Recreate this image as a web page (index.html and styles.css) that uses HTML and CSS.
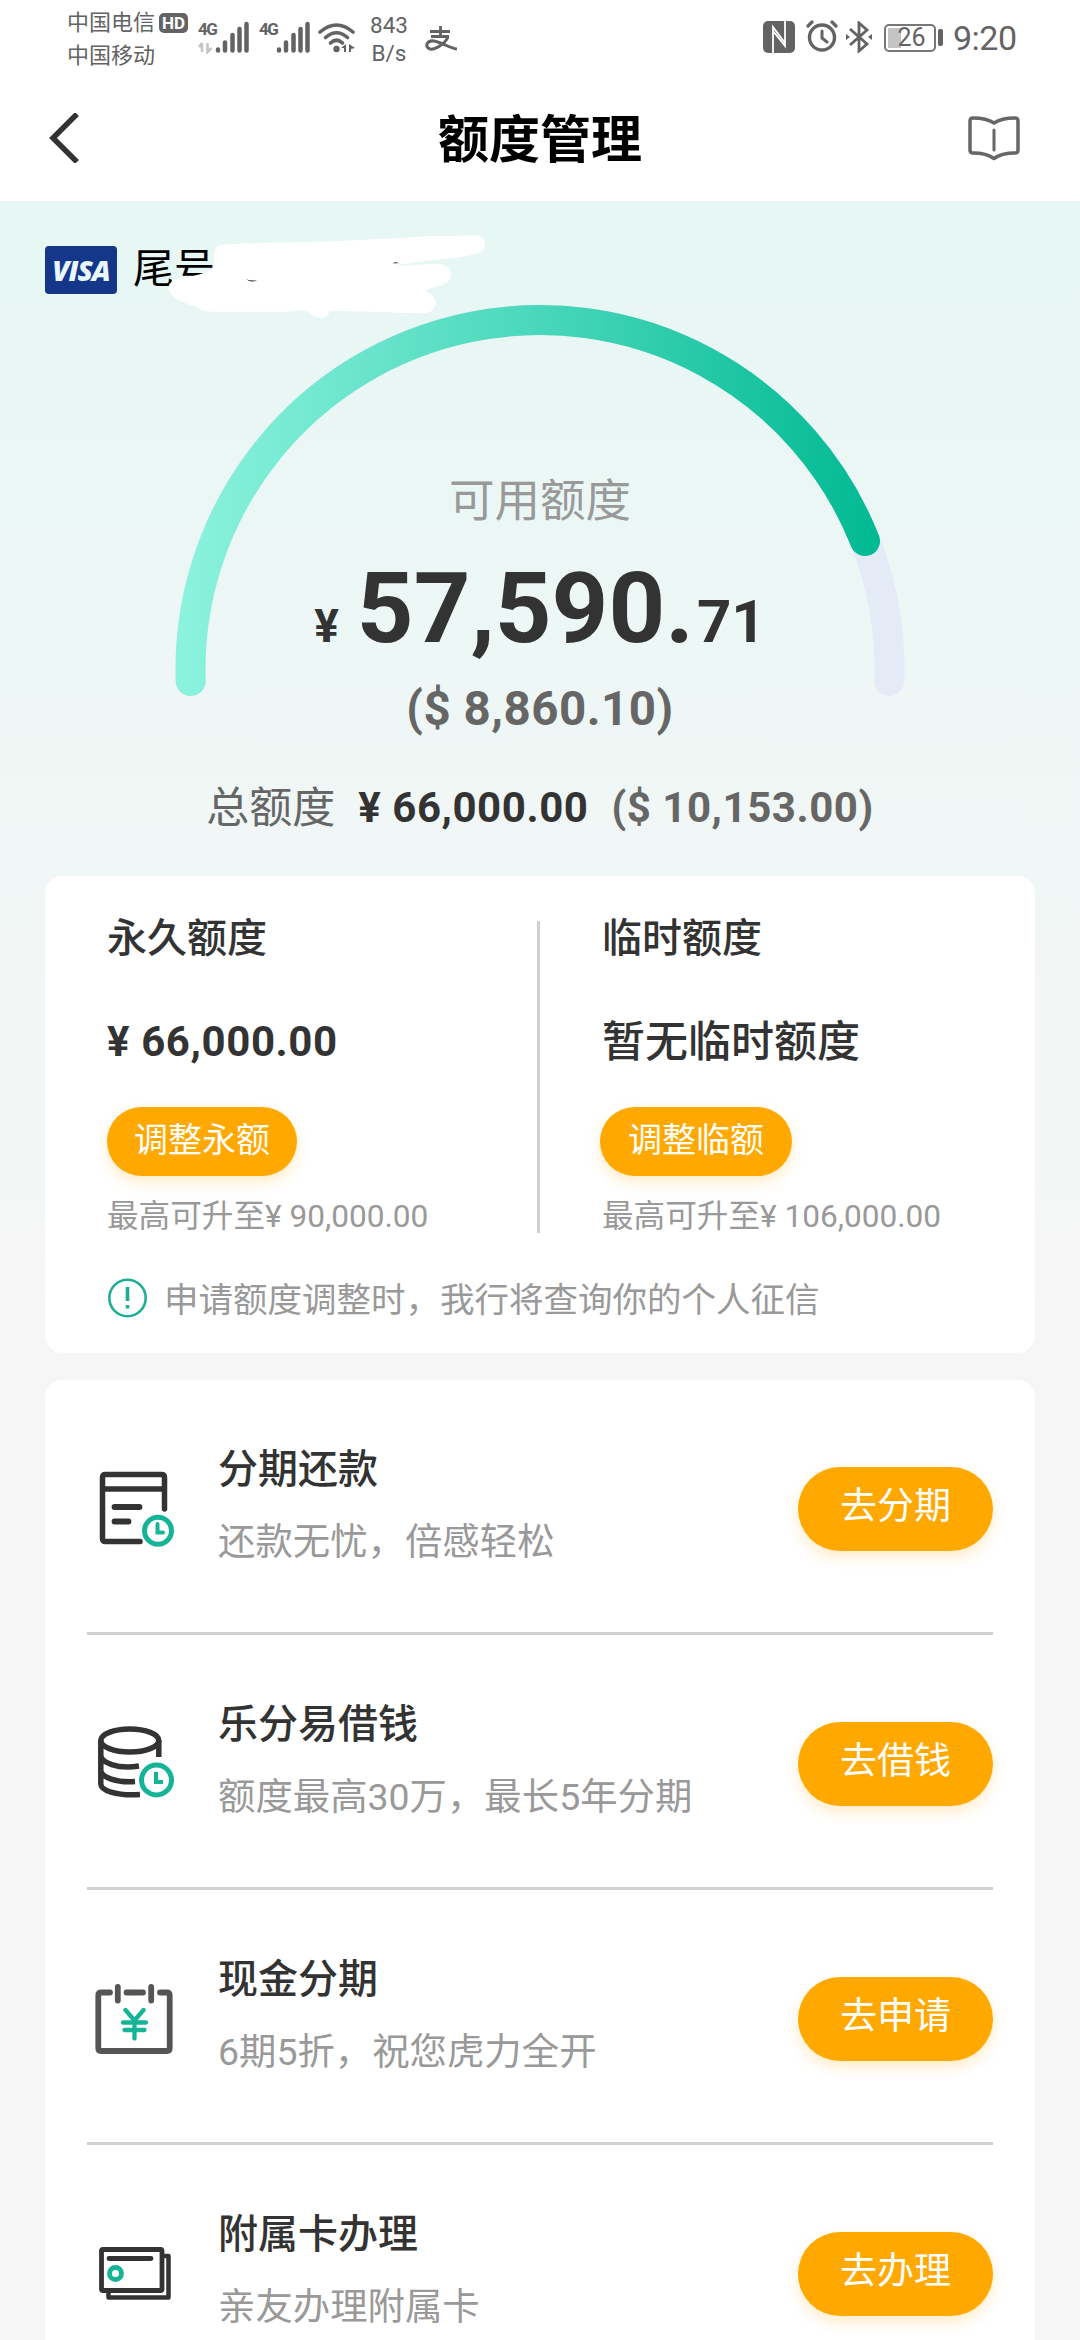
FILE: index.html
```html
<!DOCTYPE html>
<html lang="zh-CN">
<head>
<meta charset="utf-8">
<title>额度管理</title>
<link rel="stylesheet" href="styles.css">
</head>
<body>
<div class="status">
  <div class="carriers"><div>中国电信</div><div>中国移动</div></div>
  <span class="hd">HD</span>
  <div class="signal">
    <span class="net">4G</span>
    <svg width="52" height="34" viewBox="0 0 52 34">
      <path d="M4 23v9M4 23l-3 4M9.500 23v9l4-4" stroke="#c4c4c4" stroke-width="2.500" fill="none"/>
      <path d="M20 30.500v-1M27 30.500v-8M34.500 30.500V15M41.500 30.500V9M48.500 30.500V4" stroke="#636363" stroke-width="4.500" stroke-linecap="round"/>
    </svg>
  </div>
  <div class="signal second">
    <span class="net">4G</span>
    <svg width="52" height="34" viewBox="0 0 52 34">
      <path d="M20 30.500v-1M27 30.500v-8M34.500 30.500V15M41.500 30.500V9M48.500 30.500V4" stroke="#636363" stroke-width="4.500" stroke-linecap="round"/>
    </svg>
  </div>
  <svg class="wifi" width="38" height="32" viewBox="0 0 38 32">
    <g fill="none" stroke="#636363" stroke-width="3.600" stroke-linecap="round"><path d="M2 10Q18.500-4 35 10"/><path d="M7.500 15.500Q18.500 6 29.500 15.500"/><path d="M12.500 21Q18.500 15.500 24.500 21"/></g>
    <circle cx="18.500" cy="27" r="3.200" fill="#636363"/>
    <path d="M28 22v8h-2v-4h-3zM31 22l6 4-4 1v3h-2z" fill="#636363"/>
  </svg>
  <div class="speed"><div>843</div><div>B/s</div></div>
  <svg class="pay" width="32" height="26" viewBox="0 0 32 26" fill="none" stroke="#636363">
    <path d="M5 5.500h20M15.500 0v10M6 10.500h18" stroke-width="2.800"/>
    <path d="M23 11C20 18 10 24 5 23C-1 21 2 14 9 15C16 16 24 22 32 23" stroke-width="3"/>
  </svg>
  <svg class="nfc" width="32" height="32" viewBox="0 0 32 32">
    <rect width="32" height="32" rx="5" fill="#636363"/>
    <path d="M10 32V6L22 22M22 0v25L10 10" fill="none" stroke="#fff" stroke-width="1.800"/>
  </svg>
  <svg class="alarm" width="32" height="32" viewBox="0 0 32 32" fill="none" stroke="#636363" stroke-linecap="round">
    <circle cx="16" cy="17.500" r="12.500" stroke-width="3.400"/>
    <path d="M16 11v7l5 4" stroke-width="3"/><path d="M2 6l4-4M30 6l-4-4" stroke-width="3.200"/>
  </svg>
  <svg class="bt" width="26" height="32" viewBox="0 0 26 32">
    <path d="M4 8l17 15-8 7V2l8 7L4 24" fill="none" stroke="#636363" stroke-width="2.800"/>
    <path d="M0 13l4 3-4 3zM26 13l-4 3 4 3z" fill="#636363"/>
  </svg>
  <div class="battery"><span>26</span></div>
  <i class="battery-cap"></i>
  <div class="clock">9:20</div>
</div>

<header class="nav">
  <svg width="34" height="50" viewBox="0 0 34 50"><path d="M31 1L7 25l24 24" fill="none" stroke="#333" stroke-width="5.500"/></svg>
  <h1>额度管理</h1>
  <svg width="52" height="46" viewBox="0 0 52 46" fill="none" stroke="#666" stroke-width="3.500" stroke-linecap="round" stroke-linejoin="round">
    <path d="M26 8C20 4 12 3 5 3Q2 3 2 6V35Q2 38 5 38C14 38 20 39 26 43.500C32 39 38 38 47 38Q50 38 50 35V6Q50 3 47 3C40 3 32 4 26 8Z"/><path d="M26 15v20" stroke-width="3"/>
  </svg>
</header>

<main>
  <section class="hero">
    <svg class="gauge" width="740" height="410" viewBox="170 296 740 410" fill="none" stroke-width="30" stroke-linecap="round">
      <defs><linearGradient id="arc" gradientUnits="userSpaceOnUse" x1="175" y1="0" x2="880" y2="0"><stop offset="0" stop-color="#8df3de"/><stop offset=".5" stop-color="#4bd8bc"/><stop offset="1" stop-color="#00b992"/></linearGradient></defs>
      <path d="M190.700 681A349.500 349.500 0 1 1 889.300 681" stroke="#e5eaf7"/>
      <path d="M190.700 681A349.500 349.500 0 0 1 865 541" stroke="url(#arc)"/>
    </svg>
    <div class="card-no">
      <span class="visa">VISA</span><span class="tail">尾号</span>
      <svg class="mask" width="330" height="92" viewBox="435 95 990 276">
        <path d="M580 205C584 190 582 178 583 155Q588 134 606 133C730 124 860 128 950 122C1080 116 1200 110 1225 107Q1310 108 1370 104Q1396 110 1396 132Q1395 151 1375 159C1310 175 1210 180 1125 195C1180 200 1220 188 1260 191Q1294 197 1293 225Q1289 249 1260 256Q1230 262 1215 273Q1249 286 1247 311Q1241 340 1205 339C1120 336 1020 333 930 331Q920 355 903 354C890 352 870 342 860 332C840 326 820 334 800 334H570Q540 334 530 320C490 307 446 292 445 261Q450 235 490 232C520 228 555 218 580 205Z" fill="#fff"/>
        <path d="M678 237q15 5 33 3q-15 9-33-3M1118 189q8-6 18 0z" fill="#222"/>
      </svg>
    </div>
    <div class="avail-label">可用额度</div>
    <div class="avail"><span class="yen">¥</span><span class="big">57,590.</span><span class="cents">71</span></div>
    <div class="avail-usd">($ 8,860.10)</div>
    <div class="total"><span class="total-label">总额度</span><b>¥ 66,000.00</b><b class="usd">($ 10,153.00)</b></div>
  </section>

  <section class="card limits">
    <div class="cols">
      <div class="col">
        <h2>永久额度</h2>
        <div class="amount">¥ 66,000.00</div>
        <button class="pill">调整永额</button>
        <p>最高可升至¥ 90,000.00</p>
      </div>
      <i class="rule"></i>
      <div class="col temp">
        <h2>临时额度</h2>
        <div class="amount none">暂无临时额度</div>
        <button class="pill">调整临额</button>
        <p>最高可升至¥ 106,000.00</p>
      </div>
    </div>
    <div class="notice">
      <svg width="40" height="40" viewBox="0 0 40 40" fill="none" stroke="#1fae94"><circle cx="20.500" cy="20" r="18.200" stroke-width="2.600"/><path d="M20.500 9v14M20.500 27v3.600" stroke-width="3.600"/></svg>
      <span>申请额度调整时，我行将查询你的个人征信</span>
    </div>
  </section>

  <section class="card services">
    <div class="row">
      <svg width="90" height="90" viewBox="0 0 90 90" fill="none" stroke="#333" stroke-width="5.500" stroke-linecap="round">
        <path d="M50 77.500H15.500Q12.500 77.500 12.500 74.500V13.500Q12.500 10.500 15.500 10.500H71.500Q74.500 10.500 74.500 13.500V45M12.500 25h62"/><path d="M24.500 43h25M24.500 57.500h14" stroke-width="5.800"/>
        <g stroke="#16b497" stroke-width="5"><circle cx="68" cy="66.700" r="13.500"/><path d="M67.500 60v8.500H73" stroke-width="4"/></g>
      </svg>
      <div class="info"><h3>分期还款</h3><p>还款无忧，倍感轻松</p></div>
      <button class="go">去分期</button>
    </div>
    <div class="row">
      <svg width="90" height="90" viewBox="0 0 90 90" fill="none" stroke="#333" stroke-width="5.500">
        <ellipse cx="39.800" cy="21.500" rx="29" ry="11.500"/><path d="M10.800 21.500V65C10.800 71 25 77 50 75.500M68.800 21.500V38M10.800 37C12 43 26 50.500 49 47M10.800 52C12 58 26 64 45 62.500"/>
        <g stroke="#16b497" stroke-width="5"><circle cx="66.500" cy="61" r="15"/><path d="M66 53v10H73" stroke-width="4"/></g>
      </svg>
      <div class="info"><h3>乐分易借钱</h3><p>额度最高30万，最长5年分期</p></div>
      <button class="go">去借钱</button>
    </div>
    <div class="row">
      <svg width="90" height="90" viewBox="0 0 90 90" fill="none" stroke="#555" stroke-width="5.800" stroke-linecap="round">
        <path d="M20 18.500H11.300Q8.300 18.500 8.300 21.500V74Q8.300 77 11.300 77H76.700Q79.700 77 79.700 74V21.500Q79.700 18.500 76.700 18.500H70M36.500 18.500H53M27.800 13V26.500M61.200 13V26.500"/>
        <path d="M35.500 36L44.500 46.500L53.500 36M44.500 46.500V64.500M33 48.500H56M34.500 56H54.500" stroke="#16b497" stroke-width="4.300"/>
      </svg>
      <div class="info"><h3>现金分期</h3><p>6期5折，祝您虎力全开</p></div>
      <button class="go">去申请</button>
    </div>
    <div class="row">
      <svg width="90" height="90" viewBox="0 0 90 90" fill="none" stroke="#333" stroke-width="4.800" stroke-linecap="round" stroke-linejoin="round">
        <rect x="11.500" y="20.500" width="60.500" height="41" rx="1.500"/><path d="M19 29.500h42"/><path d="M75 27h3.500v41.500H18.500v-4" stroke-width="4.500"/>
        <circle cx="25.500" cy="44.500" r="6" stroke="#16b497"/>
      </svg>
      <div class="info"><h3>附属卡办理</h3><p>亲友办理附属卡</p></div>
      <button class="go">去办理</button>
    </div>
  </section>
</main>
</body>
</html>
```

FILE: styles.css
```css
* { box-sizing: border-box; margin: 0; padding: 0; }
body {
  width: 1080px;
  height: 2340px;
  overflow: hidden;
  background: #fff;
  color: #333;
  font-family: Roboto, "Noto Sans CJK SC", sans-serif;
}
svg { display: block; flex: none; }
button { border: 0; font-family: inherit; color: #fff; background: #ffa800; white-space: nowrap; }

.status { display: flex; height: 81px; padding-left: 67px; color: #636363; align-items: flex-start; }
.carriers { width: 92px; padding-top: 6px; font-size: 22px; line-height: 33px; white-space: nowrap; }
.hd { width: 29px; height: 20px; margin-top: 13px; border-radius: 5px; background: #636363; color: #fff; font-size: 17px; line-height: 20px; font-weight: 700; text-align: center; }
.signal { position: relative; margin: 20px 0 0 10px; }
.signal.second { margin-left: 9px; }
.net { position: absolute; left: 0; top: -2px; font-size: 17px; line-height: 22px; font-weight: 700; letter-spacing: -1.5px; }
.wifi { margin: 22px 0 0 7px; }
.speed { width: 44px; margin-left: 11px; padding-top: 11px; font-size: 22.5px; line-height: 28px; text-align: center; }
.pay { margin: 26px 0 0 14px; }
.nfc { margin: 21px 0 0 306px; }
.alarm { margin: 20px 0 0 11px; }
.bt { margin: 21px 0 0 8px; }
.battery { width: 52px; height: 28px; margin: 24px 0 0 12px; border: 2px solid #777; border-radius: 5px; padding: 2px 0 2px 3px; font-size: 25px; line-height: 20px; text-align: center; background: linear-gradient(#c4c4c4, #c4c4c4) 2px 2px / 13px 20px no-repeat; }
.battery-cap { width: 5px; height: 17px; margin: 29px 0 0 2px; border-radius: 2px; background: #636363; }
.clock { margin: 18px 0 0 10px; font-size: 34px; line-height: 40px; letter-spacing: -0.5px; }

.nav { display: flex; justify-content: space-between; height: 120px; padding: 32px 60px 0 46px; }
.nav h1 { margin-top: -2px; margin-left: 32px; font-size: 51px; line-height: 60px; font-weight: 700; color: #000; }
.nav svg:last-child { margin-top: 2px; }

main { height: 2139px; background: linear-gradient(#e6f7f4, #f1f7f6 675px, #f6f6f6 1100px); }
.hero { position: relative; height: 675px; padding-top: 45px; text-align: center; }
.gauge { position: absolute; left: 170px; top: 95px; }
.card-no { position: relative; display: flex; align-items: center; height: 48px; margin-left: 45px; font-size: 41px; color: #000; }
.tail { line-height: 48px; margin-top: -2px; }
.visa { width: 72px; height: 48px; margin-right: 16px; border-radius: 4px; background: #14378a; color: #e9f6fb; font: italic 800 28px/48px "Open Sans", sans-serif; letter-spacing: -1px; text-align: center; }
.mask { position: absolute; left: 120px; top: -14px; }
.avail-label { position: relative; margin-top: 178px; font-size: 45.5px; line-height: 60px; color: #999; }
.avail { position: relative; display: flex; align-items: baseline; justify-content: center; height: 100px; margin-top: 26px; font-weight: 700; line-height: 100px; }
.yen { margin-right: 18px; font-size: 46px; }
.big { font-size: 99px; }
.cents { margin-left: 3px; font-size: 60px; }
.avail-usd { margin-top: 21px; font-size: 47.5px; line-height: 60px; font-weight: 700; color: #666; letter-spacing: .5px; }
.total { display: flex; justify-content: center; margin-top: 39px; font-size: 42px; line-height: 60px; letter-spacing: .55px; }
.total-label { margin-right: 23px; color: #666; font-size: 43px; letter-spacing: 0; }
.usd { margin-left: 23px; color: #666; }

.card { margin: 0 45px; border-radius: 18px; background: #fff; }
.limits { height: 477px; padding: 33px 62px 0; }
.cols { display: flex; height: 328px; }
.col { width: 430px; }
.temp { width: 360px; padding-left: 62px; white-space: nowrap; }
.rule { width: 3px; height: 312px; margin-top: 12px; background: #d0d0d0; }
.col h2 { font-size: 40px; line-height: 60px; font-weight: 500; }
.amount { margin-top: 43px; font-size: 42px; line-height: 60px; font-weight: 700; letter-spacing: .6px; }
.amount.none { font-size: 43px; font-weight: 500; letter-spacing: 0; }
.pill { display: block; width: 190px; height: 69px; margin-top: 35px; padding-bottom: 3px; border-radius: 35px; font-size: 34px; line-height: 64px; box-shadow: 0 6px 14px rgba(255, 168, 0, .22); }
.temp .pill { width: 192px; margin-left: -2px; }
.col p { margin-top: 21px; font-size: 31.6px; line-height: 40px; color: #999; }
.notice { display: flex; align-items: center; height: 40px; margin-top: 41px; gap: 17px; font-size: 34.5px; color: #999; }
.notice span { line-height: 44px; padding-top: 3px; }

.services { height: 980px; margin-top: 27px; padding: 0 42px; }
.row { display: flex; height: 255px; padding-top: 84px; border-bottom: 3px solid #d0d0d0; }
.row > svg { margin: 0 0 0 3px; }
.info { flex: 1; margin: -24px 0 0 38px; }
.info h3 { font-size: 40px; line-height: 60px; font-weight: 500; }
.info p { margin-top: 14px; font-size: 37.4px; line-height: 56px; color: #999; }
.go { width: 195px; height: 84px; margin-top: 3px; padding-bottom: 4px; border-radius: 42px; font-size: 37px; line-height: 76px; box-shadow: 0 6px 14px rgba(255, 168, 0, .22); }
```
